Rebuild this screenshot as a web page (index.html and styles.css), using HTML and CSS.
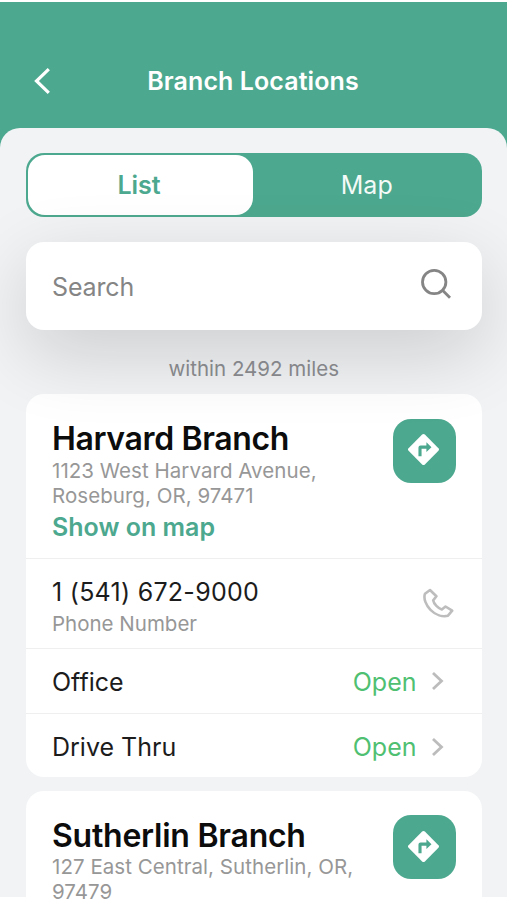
FILE: index.html
```html
<!DOCTYPE html>
<html lang="en">
<head>
<meta charset="utf-8">
<title>Branch Locations</title>
<link rel="stylesheet" href="styles.css">
</head>
<body>
<div class="screen">
  <header class="header">
    <svg class="back" viewBox="0 0 20 30" fill="none" stroke="#fff" stroke-width="3.2"><path d="M16.800 3.200 4.500 15l12.300 11.800"/></svg>
    <h1 class="header-title">Branch Locations</h1>
  </header>
  <main class="sheet">
    <nav class="tabs">
      <div class="tab tab-active">List</div>
      <div class="tab">Map</div>
    </nav>
    <div class="search">
      <span class="search-text">Search</span>
      <svg class="search-icon" viewBox="0 0 32 32" fill="none" stroke="#858585" stroke-width="2.800"><circle cx="14.200" cy="14" r="11.700"/><path d="m22.500 22.300 7.500 7.500"/></svg>
    </div>
    <p class="radius">within 2492 miles</p>
    <section class="card">
      <div class="branch">
        <div class="info">
          <h2 class="name">Harvard Branch</h2>
          <p class="address">1123 West Harvard Avenue,<br>Roseburg, OR, 97471</p>
          <a class="show">Show on map</a>
        </div>
        <div class="directions"><svg viewBox="0 0 34 34"><path fill="#fff" d="M15.600 1.600a2 2 0 0 1 2.800 0l14 14a2 2 0 0 1 0 2.800l-14 14a2 2 0 0 1-2.800 0l-14-14a2 2 0 0 1 0-2.800z"/><path fill="#4ca88e" d="M11.800 24v-9a2.200 2.200 0 0 1 2.200-2.200h6V9.600l5.200 5-5.200 5v-3.400h-5V24z"/></svg></div>
      </div>
      <div class="row phone">
        <div>
          <p class="label number">1 (541) 672-9000</p>
          <p class="caption">Phone Number</p>
        </div>
        <svg class="phone-icon" viewBox="0 0 32 32" fill="none" stroke="#bdbdbd" stroke-width="2.600" stroke-linejoin="round"><path d="M8 2 3 5.800C1.200 10.500 4 17.300 8.500 21.800c5.200 5.200 12.200 7.200 17.500 5.900l4.200-5-6.700-4.200-3.700 3c-3.300-1-8.200-5.700-8.600-9.100l3.200-4.100z"/></svg>
      </div>
      <div class="row hours">
        <span class="label">Office</span>
        <span class="open">Open</span>
        <svg class="chevron" viewBox="0 0 14 20" fill="none" stroke="#bcbcbc" stroke-width="2.800"><path d="m2 2 8.500 8L2 18"/></svg>
      </div>
      <div class="row hours last">
        <span class="label">Drive Thru</span>
        <span class="open">Open</span>
        <svg class="chevron" viewBox="0 0 14 20" fill="none" stroke="#bcbcbc" stroke-width="2.800"><path d="m2 2 8.500 8L2 18"/></svg>
      </div>
    </section>
    <section class="card">
      <div class="branch next">
        <div class="info">
          <h2 class="name">Sutherlin Branch</h2>
          <p class="address">127 East Central, Sutherlin, OR,<br>97479</p>
        </div>
        <div class="directions"><svg viewBox="0 0 34 34"><path fill="#fff" d="M15.600 1.600a2 2 0 0 1 2.800 0l14 14a2 2 0 0 1 0 2.800l-14 14a2 2 0 0 1-2.800 0l-14-14a2 2 0 0 1 0-2.800z"/><path fill="#4ca88e" d="M11.800 24v-9a2.200 2.200 0 0 1 2.200-2.200h6V9.600l5.200 5-5.200 5v-3.400h-5V24z"/></svg></div>
      </div>
    </section>
  </main>
</div>
</body>
</html>
```
FILE: styles.css
```css
* { box-sizing: border-box; margin: 0; padding: 0; }
body { background: #fff; font-family: Inter, "Liberation Sans", sans-serif; overflow: hidden; height: 900px; }
svg { display: block; flex: none; }
.screen { margin-top: 2px; height: 898px; overflow: hidden; background: linear-gradient(#4ca88e 0 200px, #f1f3f5 200px 895px, #fff 895px); }
.header { height: 126px; display: flex; align-items: center; padding: 32px 0 0 32px; }
.back { width: 20px; height: 30px; }
.header-title { flex: 1; padding-right: 53px; text-align: center; color: #fff; font-size: 25px; font-weight: 600; line-height: 30px; letter-spacing: .08px; }
.sheet { height: 769px; background: #f1f3f5; border-radius: 20px 20px 0 0; padding: 25px 25.500px 0 26px; }
.tabs { height: 63.500px; border-radius: 18px; background: #4ca88e; display: flex; padding: 1.500px; }
.tab { flex: 1; padding-left: 1px; display: flex; align-items: center; justify-content: center; font-size: 25px; color: #f3faf7; }
.tab-active { flex: 0 0 225px; padding-right: 3px; background: #fff; border-radius: 17px; color: #4ca88e; font-weight: 600; }
.search { position: relative; z-index: 1; height: 88px; margin-top: 25.500px; border-radius: 18px; background: #fff; box-shadow: 0 23px 75px rgba(0,0,0,.16); display: flex; align-items: center; justify-content: space-between; padding: 0 30px 0 26px; }
.search-text { font-size: 25px; color: #858585; letter-spacing: -.15px; margin-top: 1px; }
.search-icon { width: 32px; height: 32px; margin-top: -4px; }
.radius { position: relative; z-index: 2; height: 64px; line-height: 78px; text-align: center; font-size: 20.500px; color: #858689; }
.card { background: #fff; border-radius: 18px; margin-bottom: 14px; }
.branch { display: flex; justify-content: space-between; height: 164px; padding: 25px 25.500px 0 26px; }
.next { padding-top: 24px; }
.name { font-size: 32px; line-height: 40px; margin-bottom: -1px; font-weight: 600; color: #0c0c0c; white-space: nowrap; letter-spacing: -.36px; }
.next .name { line-height: 41px; margin-bottom: -2px; letter-spacing: -.24px; }
.address { font-size: 20.500px; line-height: 25px; color: #979797; white-space: nowrap; letter-spacing: .05px; }
.show { display: block; font-size: 25px; font-weight: 600; line-height: 39px; color: #4ca88e; white-space: nowrap; }
.directions { width: 63.500px; height: 63.500px; border-radius: 18px; background: #4ca88e; display: flex; align-items: center; justify-content: center; }
.directions svg { width: 33px; height: 33px; margin-right: 1px; margin-top: -2px; }
.next .directions svg { margin-top: 0; }
.row { border-top: 1px solid #efefef; display: flex; align-items: center; padding: 0 26px; }
.phone { height: 90px; justify-content: space-between; }
.label { font-size: 25px; line-height: 34px; color: #1c1c1c; }
.number { letter-spacing: .27px; margin-top: 6px; }
.caption { font-size: 20.500px; line-height: 29px; color: #979797; }
.phone-icon { width: 32px; height: 32px; margin-right: 2px; }
.hours { height: 65px; padding-top: 1px; }
.last { height: 64px; padding-top: 3px; }
.open { margin-left: auto; font-size: 25px; color: #4fc071; }
.chevron { width: 14px; height: 20px; margin: -1px 11px 0 14px; }
```
